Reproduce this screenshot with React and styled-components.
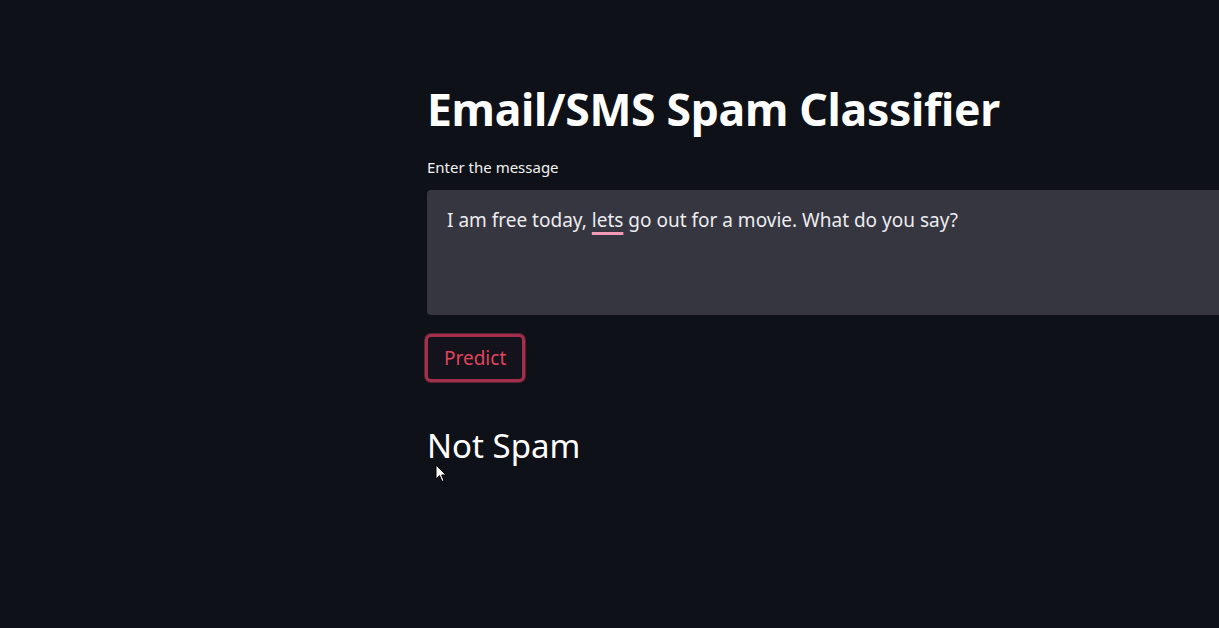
import React from 'react';
import styled, { createGlobalStyle } from 'styled-components';

const GlobalStyle = createGlobalStyle`
  html, body {
    margin: 0;
    padding: 0;
    background: #0f1118;
    overflow: hidden;
  }
  body {
    font-family: "Noto Sans", "Open Sans", sans-serif;
    color: #fafafa;
  }
`;

const PAGE = styled.div`
  width: 1219px;
  height: 628px;
  position: relative;
  overflow: hidden;
`;

const MAIN = styled.main`
  padding: 78px 0 0 427px;
  width: 900px;
  display: flex;
  flex-direction: column;
`;

const TITLE = styled.h1`
  margin: 0;
  font-family: "Noto Sans", sans-serif;
  font-weight: 700;
  font-size: 44.5px;
  line-height: 62px;
  color: #ffffff;
  letter-spacing: -0.3px;
`;

const LABEL = styled.label`
  margin-top: 16px;
  font-size: 15px;
  line-height: 22px;
  color: #f2f2f2;
`;

const FIELD = styled.div`
  margin-top: 12px;
  height: 125px;
  width: 900px;
  background: #363641;
  border-radius: 4px;
  box-sizing: border-box;
  padding: 16px 20px;
  font-size: 19px;
  line-height: 28px;
  color: #ececef;
`;

const MISSPELT = styled.span`
  text-decoration: underline;
  text-decoration-color: #f19bb6;
  text-decoration-thickness: 3px;
  text-underline-offset: 5px;
`;

const BUTTON = styled.button`
  margin-top: 19px;
  align-self: flex-start;
  margin-left: -2px;
  height: 48px;
  padding: 0 16px;
  background: #14121a;
  border: 3px solid #a42f4c;
  border-radius: 6px;
  box-shadow: 0 0 0 1px #5a2233;
  color: #e0435e;
  font-family: "Noto Sans", sans-serif;
  font-size: 19px;
`;

const RESULT = styled.h2`
  margin: 42px 0 0;
  font-weight: 400;
  font-size: 33px;
  line-height: 44px;
  color: #ffffff;
`;

const CURSOR = styled.svg`
  position: absolute;
  left: 435px;
  top: 464px;
`;

export default function App() {
  return (
    <PAGE>
      <GlobalStyle />
      <MAIN>
        <TITLE>Email/SMS Spam Classifier</TITLE>
        <LABEL>Enter the message</LABEL>
        <FIELD>
          I am free today, <MISSPELT>lets</MISSPELT> go out for a movie. What do you say?
        </FIELD>
        <BUTTON>Predict</BUTTON>
        <RESULT>Not Spam</RESULT>
      </MAIN>
      <CURSOR width="12" height="19" viewBox="0 0 12 19">
        <path d="M1 1 L1 15 L4.5 11.5 L7 17.5 L9 16.6 L6.6 11 L11 11 Z" fill="#ffffff" stroke="#000" strokeWidth="1" />
      </CURSOR>
    </PAGE>
  );
}
